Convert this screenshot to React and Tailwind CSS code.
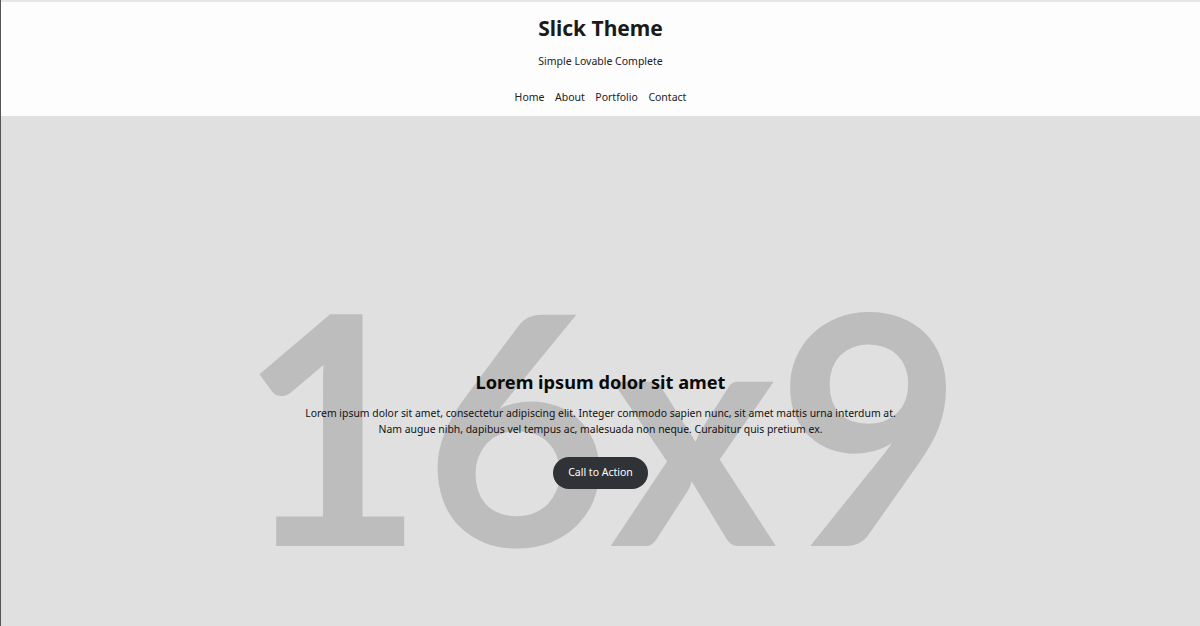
import React from 'react';

const navLinks = ['Home', 'About', 'Portfolio', 'Contact'];

const Header = () => (
    <header className="bg-[#fdfdfd] border-t-2 border-[#e6e6e6] h-[116px] flex flex-col items-center">
        <h1 className="mt-[12px] text-[21px] leading-[28px] font-bold text-[#1a1a1a]">Slick Theme</h1>
        <p className="mt-[11px] text-[10.5px] leading-[16px] text-[#222]">Simple Lovable Complete</p>
        <nav className="mt-[20px] flex gap-[10.5px] text-[10.5px] leading-[16px] text-[#222]">
            {navLinks.map(link => (
                <a key={link} href="#" className="hover:underline">{link}</a>
            ))}
        </nav>
    </header>
);

const Hero = () => (
    <section className="relative h-[630px] bg-[#e0e0e0] overflow-hidden">
        {/* placeholder image text */}
        <div
            className="absolute inset-0 pb-[18px] flex items-center justify-center font-bold text-[#bdbdbd] text-[320px] leading-none select-none"
            style={{ fontFamily: 'Lato, sans-serif' }}
        >
            16x9
        </div>
        <div className="relative h-full pb-[4px] flex flex-col items-center justify-center text-center">
            <h2 className="text-[18.2px] leading-[26px] font-bold text-[#0a0a0a]">Lorem ipsum dolor sit amet</h2>
            <p className="mt-[10px] text-[10.4px] leading-[16px] text-[#111]">
                Lorem ipsum dolor sit amet, consectetur adipiscing elit. Integer commodo sapien nunc, sit amet mattis urna interdum at.
                <br />
                Nam augue nibh, dapibus vel tempus ac, malesuada non neque. Curabitur quis pretium ex.
            </p>
            <button className="mt-[20px] h-[32px] px-[15px] rounded-full bg-[#2f3236] text-white text-[10.5px]">
                Call to Action
            </button>
        </div>
    </section>
);

export default function App() {
    return (
        <div className="min-h-[626px] border-l border-[#555] overflow-hidden" style={{ fontFamily: '"Noto Sans", "Open Sans", sans-serif' }}>
            <Header />
            <Hero />
        </div>
    );
}
